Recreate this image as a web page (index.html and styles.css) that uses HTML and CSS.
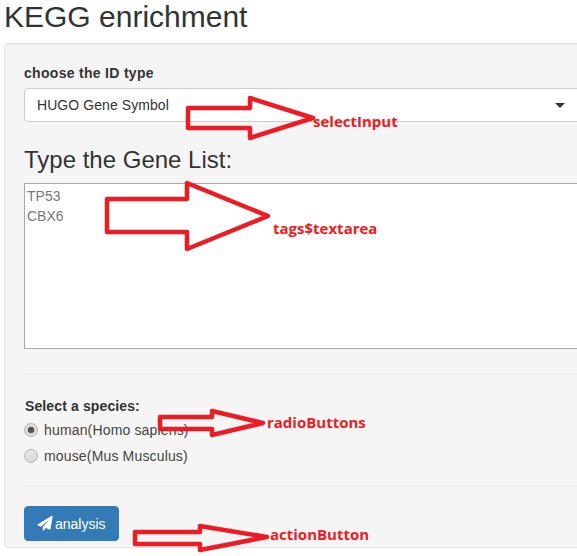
FILE: index.html
```html
<!DOCTYPE html>
<html lang="en">
<head>
<meta charset="utf-8">
<title>KEGG enrichment</title>
<link rel="stylesheet" href="styles.css">
</head>
<body>
<div class="page">
  <h2 class="title">KEGG enrichment</h2>
  <form class="well">
    <label class="field-label">choose the ID type</label>
    <div class="select">
      <span class="select-value">HUGO Gene Symbol</span>
      <i class="caret"></i>
    </div>
    <h3 class="subtitle">Type the Gene List:</h3>
    <textarea class="genes" rows="8">TP53
CBX6</textarea>
    <hr class="rule rule-top">
    <label class="field-label species">Select a species:</label>
    <label class="radio"><input type="radio" name="species" checked><span>human(Homo sapiens)</span></label>
    <label class="radio"><input type="radio" name="species"><span>mouse(Mus Musculus)</span></label>
    <hr class="rule rule-bottom">
    <button type="button" class="btn">
      <svg class="plane" viewBox="0 0 16 16" aria-hidden="true"><path d="M15.6.3 13.3 14a.6.6 0 0 1-.9.4L8.3 12.7 6 15.4c-.3.4-.9.2-.9-.4v-3.2L12.900 3 3.200 11.400-.1 10a.6.6 0 0 1 0-1.100L14.800-.3c.4-.2.900.1.800.6Z"/></svg>
      analysis
    </button>
  </form>
  <svg class="arrows" viewBox="0 0 577 556" aria-hidden="true">
    <polygon points="188,108 250,108 250,98 313,118 250,138 250,128 188,128"/>
    <polygon points="107,199 187,199 187,183 268,216 187,249 187,232 107,232"/>
    <polygon points="160,417 212,417 212,411 263,423 212,435 212,429 160,429"/>
    <polygon points="135,532 200,532 200,526 267,537 200,550 200,544 135,544"/>
  </svg>
  <span class="note note-select">selectInput</span>
  <span class="note note-text">tags$textarea</span>
  <span class="note note-radio">radioButtons</span>
  <span class="note note-action">actionButton</span>
</div>
</body>
</html>
```
FILE: styles.css
```css
* { box-sizing: border-box; }
html, body { margin: 0; padding: 0; background: #fff; }
body { font-family: "Liberation Sans", Arial, sans-serif; font-size: 14px; line-height: 20px; color: #333; }
.page { position: relative; width: 577px; height: 556px; overflow: hidden; padding-left: 4px; }
.title { margin: 0; height: 43px; font-size: 30px; line-height: 34px; font-weight: 400; }
.well { width: 640px; height: 505px; padding: 19px; background: #f5f5f5; border: 1px solid #e3e3e3; border-radius: 4px; box-shadow: inset 0 1px 1px rgba(0,0,0,.05); }
.field-label { display: block; height: 25px; font-weight: 700; letter-spacing: .3px; }
.select { display: flex; align-items: center; width: 600px; height: 34px; padding: 0 12px; background: #fff; border: 1px solid #ccc; border-radius: 4px; }
.select-value { letter-spacing: .07px; }
.caret { width: 0; height: 0; margin-left: 386px; border-style: solid; border-width: 5px 5px 0; border-color: #333 transparent transparent; }
.subtitle { margin: 25px 0 10px; font-size: 24px; line-height: 26px; font-weight: 400; }
.genes { display: block; width: 600px; height: 166px; margin: 0; padding: 2px; border: 1px solid #a9a9a9; background: #fff; color: #777; font: 14px/20px "Liberation Sans", Arial, sans-serif; resize: none; outline: 0; }
.rule { margin: 0; border: 0; border-top: 1px solid #eee; }
.rule-top { margin-top: 25px; }
.species { margin-top: 21px; height: 21px; padding-left: 1px; letter-spacing: .12px; }
.radio { display: flex; align-items: center; gap: 6px; height: 26px; color: #444; letter-spacing: .16px; }
.radio input { appearance: none; width: 14px; height: 14px; margin: 0; border: 1px solid #b5b5b5; border-radius: 50%; background: linear-gradient(#e8e8e8, #d8d8d8); }
.radio input:checked { background: radial-gradient(circle, #555 0 3px, #dcdcdc 3.600px); }
.rule-bottom { margin-top: 17px; }
.btn { display: flex; align-items: center; gap: 2px; width: 95px; height: 35px; margin-top: 19px; padding: 0 13px; background: #337ab7; border: 1px solid #337ab7; border-radius: 4px; color: #fff; font: 14px/20px "Liberation Sans", Arial, sans-serif; }
.plane { width: 15px; height: 15px; fill: #fff; overflow: visible; flex: none; }
.arrows { position: absolute; left: 0; top: 0; width: 577px; height: 556px; fill: none; stroke: #ed1c24; stroke-width: 4.500; stroke-linejoin: round; }
.note { position: absolute; font-family: "Open Sans", sans-serif; font-size: 15px; line-height: 20px; font-weight: 700; color: #ed1c24; white-space: nowrap; }
.note-select { left: 313px; top: 111px; }
.note-text { left: 273px; top: 218px; }
.note-radio { left: 267px; top: 412px; }
.note-action { left: 270px; top: 524px; }
```
